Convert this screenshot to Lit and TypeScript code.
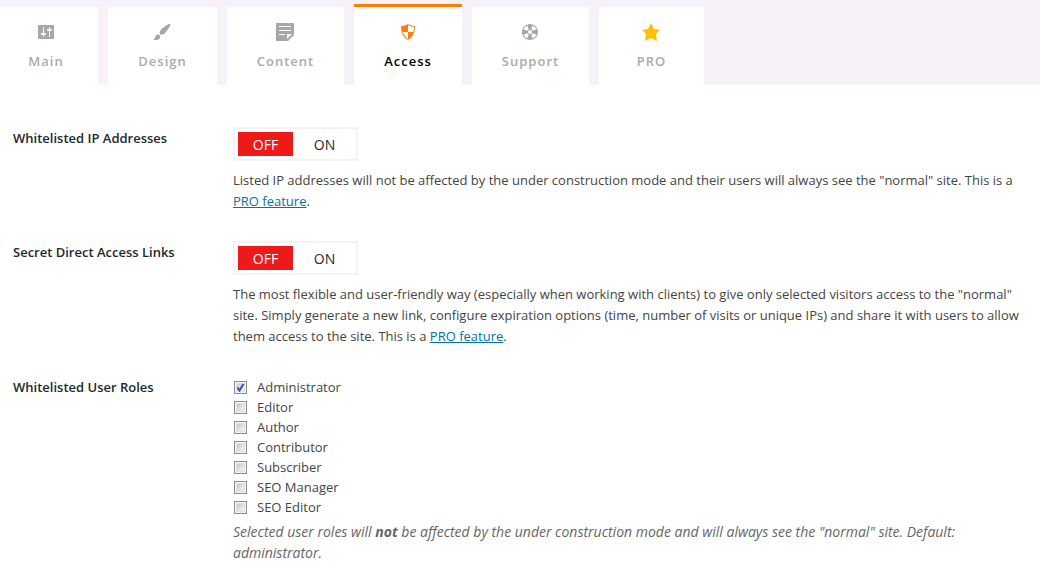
import { LitElement, html, css, svg, nothing } from "lit";
import { customElement, property, state } from "lit/decorators.js";
import { classMap } from "lit/directives/class-map.js";

interface Tab {
  id: string;
  label: string;
  path: string;
}

const TABS: Tab[] = [
  {
    id: "main",
    label: "Main",
    path: "M18 16V4c0-.55-.45-1-1-1H3c-.55 0-1 .45-1 1v12c0 .55.45 1 1 1h14c.55 0 1-.45 1-1zM8 11h1c.55 0 1 .45 1 1s-.45 1-1 1H8v1.5c0 .28-.22.5-.5.5s-.5-.22-.5-.5V13H6c-.55 0-1-.45-1-1s.45-1 1-1h1V5.500c0-.28.22-.5.5-.5s.5.22.5.5V11zm5-2h-1c-.55 0-1-.45-1-1s.45-1 1-1h1V5.500c0-.28.22-.5.5-.5s.5.22.5.5V7h1c.55 0 1 .45 1 1s-.45 1-1 1h-1v5.500c0 .28-.22.5-.5.5s-.5-.22-.5-.5V9z",
  },
  {
    id: "design",
    label: "Design",
    path: "M18.330 3.570s.27-.8-.31-1.360c-.53-.52-1.220-.24-1.220-.24-.61.3-5.760 3.470-7.670 5.570-.86.96-2.060 3.790-1.090 4.820.92.98 3.960-.17 4.790-1 2.060-2.060 5.210-7.170 5.500-7.790zM1.400 17.650c2.370-1.560 1.460-3.410 3.230-4.640.93-.65 2.220-.62 3.080.29.63.67.8 2.570-.16 3.460-1.570 1.450-4 1.550-6.150.89z",
  },
  {
    id: "content",
    label: "Content",
    path: "M1 1h18v12l-6 6H1V1zm3 3v1h12V4H4zm0 4v1h12V8H4zm6 5v-1H4v1h6zm2 4l5-5h-5v5z",
  },
  {
    id: "access",
    label: "Access",
    path: "M10 2s3 2 7 2c0 11-7 14-7 14S3 15 3 4c4 0 7-2 7-2zm0 8h5s1-1 1-5c0 0-5-1-6-2v7H5c1 4 5 7 5 7v-7z",
  },
  {
    id: "support",
    label: "Support",
    path: "M18 10c0-4.420-3.580-8-8-8s-8 3.580-8 8 3.580 8 8 8 8-3.580 8-8zM7.230 3.570L8.720 7.300c-.62.29-1.130.8-1.420 1.420L3.570 7.230c.71-1.640 2.020-2.950 3.660-3.660zm9.200 3.660L12.700 8.720c-.29-.62-.8-1.130-1.420-1.420l1.490-3.730c1.640.71 2.950 2.020 3.660 3.660zM10 12c-1.100 0-2-.9-2-2s.9-2 2-2 2 .9 2 2-.9 2-2 2zm-6.430.77l3.730-1.490c.29.62.8 1.130 1.420 1.420l-1.490 3.730c-1.640-.71-2.950-2.020-3.660-3.660zm9.200 3.660l-1.490-3.730c.62-.29 1.130-.8 1.420-1.420l3.730 1.490c-.71 1.640-2.020 2.950-3.660 3.660z",
  },
  {
    id: "pro",
    label: "PRO",
    path: "M10 1l3 6 6 .75-4.120 4.620L16 19l-6-3-6 3 1.130-6.630L1 7.750 7 7z",
  },
];

const ROLES = [
  "Administrator",
  "Editor",
  "Author",
  "Contributor",
  "Subscriber",
  "SEO Manager",
  "SEO Editor",
];

@customElement("on-off-toggle")
export class OnOffToggle extends LitElement {
  @property() name = "";
  @property() label = "";
  @property({ type: Boolean }) on = false;

  static styles = css`
    :host {
      display: block;
    }
    .toggle {
      display: inline-grid;
      grid-template-columns: 55px 63px;
      margin: 0;
      padding: 3px 0 3px 3px;
      border: 2px solid #f6f1f8;
      vertical-align: top;
      min-width: 0;
    }
    .option {
      position: relative;
      padding: 3px 0 1px;
      text-align: center;
      font-size: 14px;
      line-height: 20px;
      font-weight: 500;
      color: #23282d;
      cursor: pointer;
    }
    .radio {
      position: absolute;
      inset: 0;
      margin: 0;
      appearance: none;
      cursor: pointer;
    }
    .option.off.selected {
      background: #ee1919;
      color: #fff;
    }
    .option.on.selected {
      background: #46b450;
      color: #fff;
    }
  `;

  private option(value: boolean) {
    const text = value ? "ON" : "OFF";
    return html`<label
      class=${classMap({ option: true, on: value, off: !value, selected: this.on === value })}
    >
      <input
        class="radio"
        type="radio"
        name=${this.name}
        .checked=${this.on === value}
        @change=${() => (this.on = value)}
      />${text}</label
    >`;
  }

  render() {
    return html`<fieldset class="toggle" aria-label=${this.label}>
      ${this.option(false)}${this.option(true)}
    </fieldset>`;
  }
}

@customElement("app-root")
export class AppRoot extends LitElement {
  @state() private active = "access";
  @state() private allowed = new Set(["Administrator"]);

  static styles = css`
    :host {
      display: block;
      background: #fff;
      color: #444;
      font: 13px/21px "Open Sans", "Noto Sans", sans-serif;
    }
    .tabs {
      display: grid;
      grid-template-columns: 98px 109px 117px 108px 117px 105px;
      column-gap: 10px;
      padding-top: 4px;
      background: #f7f2f9;
    }
    .tab {
      display: flex;
      flex-direction: column;
      align-items: center;
      gap: 9px;
      margin-top: 3px;
      padding: 15px 0 14px;
      border: 0;
      background: #fff;
      color: #aaa;
      font: 600 13px/20px "Open Sans", "Noto Sans", sans-serif;
      letter-spacing: 1px;
      cursor: pointer;
    }
    .tab.main {
      padding-right: 6px;
    }
    .tab.active {
      margin-top: 0;
      border-top: 3px solid #ff7d00;
      color: #000;
    }
    .icon {
      width: 20px;
      height: 20px;
      margin-right: 1px;
      fill: #aaa5ac;
    }
    .active .icon {
      fill: #ff7d00;
    }
    .pro .icon {
      fill: #ffc107;
    }
    .settings {
      display: grid;
      grid-template-columns: 210px minmax(0, 1fr);
      column-gap: 10px;
      row-gap: 29px;
      padding: 42px 12px 8px 13px;
    }
    .title {
      margin: 0;
      padding-top: 1px;
      color: #23282d;
      font-size: 13px;
      line-height: 21px;
      font-weight: 600;
    }
    .text {
      margin: 9px 0 0;
    }
    .link {
      color: #0073aa;
    }
    .roles {
      display: grid;
      margin: 0;
      padding: 1px 0 0;
      border: 0;
    }
    .role {
      display: flex;
      align-items: center;
      gap: 10px;
      line-height: 20px;
      padding-left: 1px;
    }
    .box {
      display: grid;
      place-items: center;
    }
    .check,
    .tick {
      grid-area: 1 / 1;
    }
    .check {
      appearance: none;
      width: 13px;
      height: 13px;
      margin: 0;
      border: 1px solid #8e8f8f;
      background: linear-gradient(135deg, #c3c8d3, #f6f6f6) center / 7px 7px no-repeat,
        linear-gradient(#dfe0e2, #dfe0e2) center / 9px 9px no-repeat, #f4f4f4;
    }
    .tick {
      width: 9px;
      height: 9px;
      fill: none;
      stroke: #3a55a0;
      stroke-width: 2;
      pointer-events: none;
    }
    .note {
      margin: 4px 0 0;
      color: #666;
      font-size: 14px;
      font-style: italic;
    }
  `;

  private toggleRole(role: string) {
    const next = new Set(this.allowed);
    next.has(role) ? next.delete(role) : next.add(role);
    this.allowed = next;
  }

  private renderTab(tab: Tab) {
    const active = tab.id === this.active;
    return html`<button
      class=${classMap({ tab: true, [tab.id]: true, active })}
      role="tab"
      aria-selected=${active ? "true" : "false"}
      @click=${() => (this.active = tab.id)}
    >
      <svg class="icon" viewBox="0 0 20 20" aria-hidden="true">${svg`<path d=${tab.path}></path>`}</svg>
      <span>${tab.label}</span>
    </button>`;
  }

  private renderRole(role: string) {
    const checked = this.allowed.has(role);
    return html`<label class="role">
      <span class="box">
        <input
          class="check"
          type="checkbox"
          .checked=${checked}
          @change=${() => this.toggleRole(role)}
        />
        ${checked
          ? html`<svg class="tick" viewBox="0 0 9 9" aria-hidden="true">
              <path d="M1.500 4.500l2 3L7.500 1"></path>
            </svg>`
          : nothing}
      </span>
      <span>${role}</span>
    </label>`;
  }

  render() {
    return html`
      <nav class="tabs" role="tablist">${TABS.map((t) => this.renderTab(t))}</nav>
      <main class="settings">
        <h2 class="title">Whitelisted IP Addresses</h2>
        <section>
          <on-off-toggle name="ip" label="Whitelisted IP Addresses"></on-off-toggle>
          <p class="text">
            Listed IP addresses will not be affected by the under construction mode and their users
            will always see the "normal" site. This is a
            <a class="link" href="#pro">PRO feature</a>.
          </p>
        </section>
        <h2 class="title">Secret Direct Access Links</h2>
        <section>
          <on-off-toggle name="links" label="Secret Direct Access Links"></on-off-toggle>
          <p class="text">
            The most flexible and user-friendly way (especially when working with clients) to give
            only selected visitors access to the "normal" site. Simply generate a new link,
            configure expiration options (time, number of visits or unique IPs) and share it with
            users to allow them access to the site. This is a
            <a class="link" href="#pro">PRO feature</a>.
          </p>
        </section>
        <h2 class="title">Whitelisted User Roles</h2>
        <section>
          <fieldset class="roles" aria-label="Whitelisted User Roles">
            ${ROLES.map((r) => this.renderRole(r))}
          </fieldset>
          <p class="note">
            Selected user roles will <strong>not</strong> be affected by the under construction mode
            and will always see the "normal" site. Default: administrator.
          </p>
        </section>
      </main>
    `;
  }
}
